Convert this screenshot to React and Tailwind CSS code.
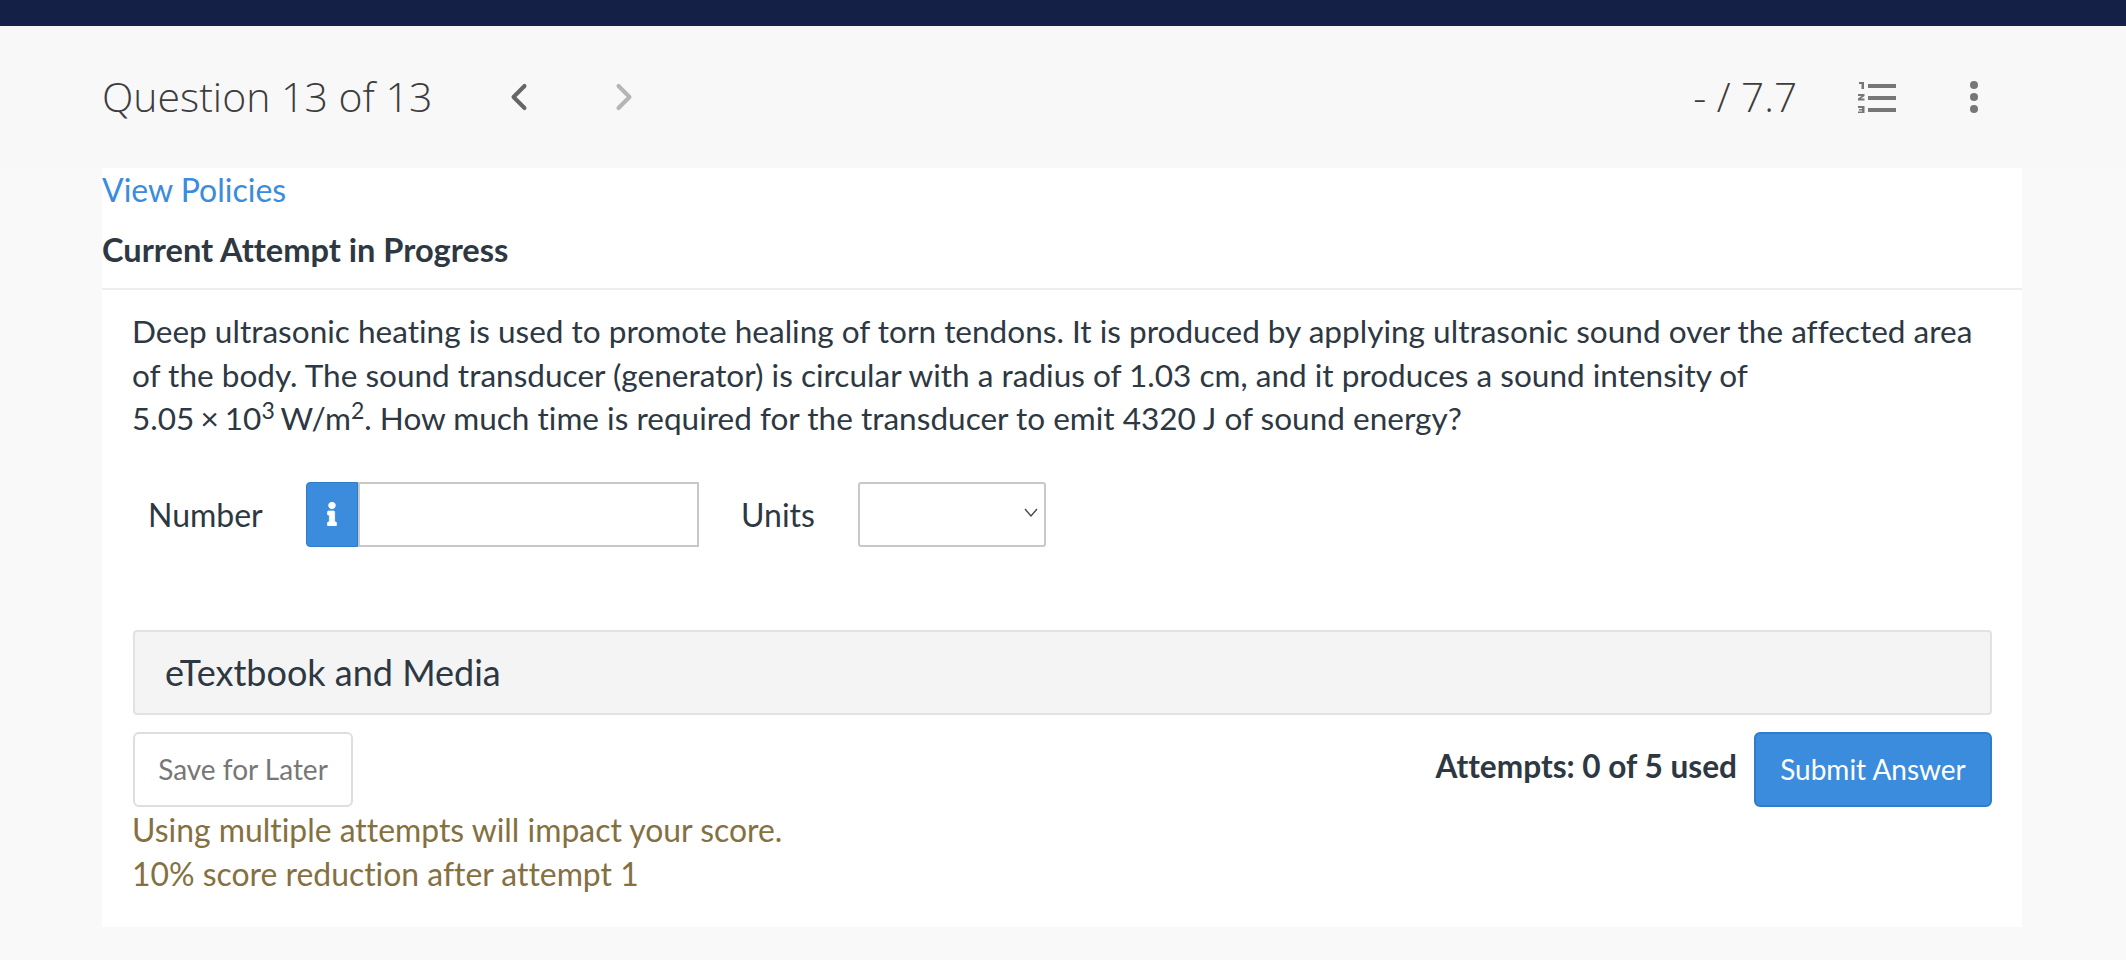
import { ChevronLeft, ChevronRight } from "lucide-react";
import { FaInfo } from "react-icons/fa";

function NumberedListIcon() {
  return (
    <svg width="38" height="32" viewBox="0 0 38 32" fill="#777777" aria-hidden="true">
      <rect x="10" y="3" width="28" height="4" />
      <rect x="10" y="15" width="28" height="4" />
      <rect x="10" y="27" width="28" height="4" />
      <path d="M1 1h5v7H3.5V3H1z" />
      <path d="M0 13h6.5v2L3 17.4h3.5V19.5H0v-2l3.5-2.4H0z" />
      <path d="M0 25h6.5v7.5H0v-2h4v-1H1v-1.6h3v-.9H0z" />
    </svg>
  );
}

function KebabIcon() {
  return (
    <svg width="8" height="32" viewBox="0 0 8 32" fill="#777777" aria-hidden="true">
      <circle cx="4" cy="4" r="4" />
      <circle cx="4" cy="16" r="4" />
      <circle cx="4" cy="28" r="4" />
    </svg>
  );
}

export default function App() {
  return (
    <div className="min-h-screen bg-[#f9f9f9] font-['Lato',sans-serif] text-[#2d3842] [font-variant-ligatures:none]">
      <div className="h-[26px] bg-[#152046]" />

      <header className="h-[142px] flex items-center pl-[102px] bg-[#f8f8f8] font-['Open_Sans',sans-serif]">
        <h1 className="w-[395px] pb-[2px] text-[41px] font-light text-[#3d3d3d] leading-none">Question 13 of 13</h1>
        <ChevronLeft className="w-[44px] h-[44px] text-[#666666]" strokeWidth={2.2} />
        <ChevronRight className="w-[44px] h-[44px] ml-[61px] text-[#b5b5b5]" strokeWidth={2.2} />
        <div className="ml-auto flex items-center">
          <span className="text-[40.5px] font-light text-[#3d3d3d] leading-none">- / 7.7</span>
          <span className="ml-[61px] flex"><NumberedListIcon /></span>
          <span className="ml-[74px] mr-[148px] flex"><KebabIcon /></span>
        </div>
      </header>

      <main className="mx-[102px] w-[1920px] bg-white h-[759px]">
        <a href="#" className="block pt-[3px] text-[32px] leading-[38px] text-[#3b8cdc]">View Policies</a>
        <h2 className="mt-[21px] text-[32.6px] leading-[40px] font-bold text-[#2d3842]">Current Attempt in Progress</h2>

        <div className="mt-[18px] border-t-2 border-[#eeeeee] px-[31px] pt-[20px]">
          <p className="-ml-px w-[1850px] text-[31.55px] leading-[43.5px] text-[#2d3842]">
            Deep ultrasonic heating is used to promote healing of torn tendons. It is produced by applying ultrasonic sound over the affected area of the body. The sound transducer (generator) is circular with a radius of 1.03 cm, and it produces a sound intensity of{" "}
            <span className="whitespace-nowrap [word-spacing:-2px]">5.05 × 10<sup className="text-[23px] leading-none">3</sup> W/m<sup className="text-[23px] leading-none">2</sup>.</span> How much time is required for the transducer to emit 4320 J of sound energy?
          </p>

          <div className="mt-[41px] flex items-center pl-[15px]">
            <label className="w-[158px] pt-[2px] text-[32px] leading-none">Number</label>
            <span className="flex items-center justify-center w-[52px] h-[65px] rounded-l-[4px] bg-[#3b8cdc] border border-[#2f7dc9] text-white">
              <FaInfo className="w-[10px] h-[24px]" stroke="currentColor" strokeWidth="15" />
            </span>
            <input type="text" className="w-[341px] h-[65px] border-2 border-[#c8c8c8] bg-white outline-none" />
            <label className="ml-[42px] w-[117px] pt-[2px] text-[32px] leading-none">Units</label>
            <div className="relative w-[188px] h-[65px]">
              <select className="w-full h-full appearance-none rounded-[3px] border-2 border-[#c8c8c8] bg-white outline-none" />
              <svg className="absolute right-[8px] top-[26px] w-[14px] h-[10px]" viewBox="0 0 14 10" fill="none" stroke="#444444" strokeWidth="1.3" aria-hidden="true">
                <path d="M1 1l6 7 6-7" />
              </svg>
            </div>
          </div>

          <div className="mt-[83px] h-[85px] w-[1859px] flex items-center px-[30px] rounded-[4px] border-2 border-[#e2e2e2] bg-[#f4f4f4] text-[36px] text-[#2d3842]">
            eTextbook and Media
          </div>

          <div className="mt-[17px] w-[1859px] flex items-start justify-between">
            <button type="button" className="w-[220px] h-[75px] rounded-[6px] border-2 border-[#dedede] bg-white text-[28px] text-[#777777]">Save for Later</button>
            <div className="flex items-start">
              <span className="mt-[16px] text-[31.6px] leading-[36px] font-bold text-[#2d3842]">Attempts: 0 of 5 used</span>
              <button type="button" className="ml-[17px] w-[238px] h-[75px] rounded-[6px] border-2 border-[#2f7dc9] bg-[#3b8cdc] text-[28px] text-white">Submit Answer</button>
            </div>
          </div>

          <p className="-ml-px mt-[1px] text-[31.9px] leading-[44px] text-[#85703f]">
            Using multiple attempts will impact your score.<br />
            10% score reduction after attempt 1
          </p>
        </div>
      </main>
    </div>
  );
}
